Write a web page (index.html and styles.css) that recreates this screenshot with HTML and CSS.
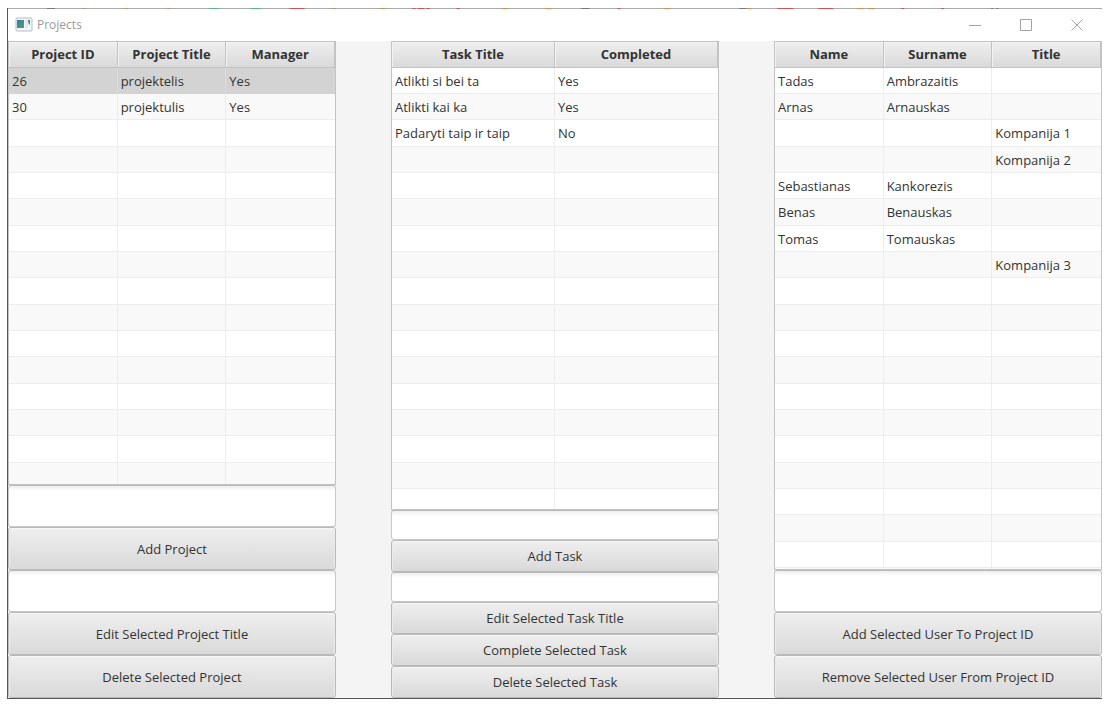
FILE: index.html
```html
<!DOCTYPE html>
<html lang="en">
<head>
<meta charset="utf-8">
<title>Projects</title>
<link rel="stylesheet" href="styles.css">
</head>
<body>
<div class="window">
  <svg class="edge" viewBox="0 0 1095 1" preserveAspectRatio="none" aria-hidden="true">
    <rect width="1095" height="1" fill="#aaa"/>
    <path stroke="#777" d="M39 .5h8M574 .5h8M732 .5h7M984 .5h2M989 .5h2"/>
    <path stroke="#d98a4a" d="M75 .5h3M117 .5h3M159 .5h3M325 .5h3M373 .5h5M495 .5h5M538 .5h6M657 .5h5M740 .5h4M850 .5h6M861 .5h6"/>
    <path stroke="#5cb784" d="M201 .5h10M243 .5h10"/>
    <path stroke="#d0504c" d="M282 .5h15M405 .5h3M410 .5h7M419 .5h3M449 .5h3M610 .5h3M770 .5h16M811 .5h15M894 .5h3M934 .5h3"/>
  </svg>
  <header class="titlebar">
    <svg class="app-icon" width="18" height="16" viewBox="0 0 18 16" aria-hidden="true">
      <defs><linearGradient id="pic" x1="0" y1="0" x2="1" y2="1"><stop offset="0" stop-color="#3a78a8"/><stop offset="1" stop-color="#4ba66c"/></linearGradient></defs>
      <rect x="1" y="1" width="16" height="13" rx="1" fill="#f3f5f6" stroke="#b3bdc4"/>
      <rect x="2" y="3" width="7" height="8" fill="url(#pic)"/>
      <rect x="10" y="3" width="3" height="8" fill="#e4e8ec"/>
      <path d="M13 3h2v5q-2-1-2-5z" fill="#3f8f8c"/>
    </svg>
    <h1 class="title">Projects</h1>
    <div class="window-buttons">
      <button class="window-button" type="button" aria-label="Minimize"><svg width="12" height="12"><path d="M0 6.500h12"/></svg></button>
      <button class="window-button" type="button" aria-label="Maximize"><svg width="12" height="12"><path d="M.5 .5h11v11h-11z"/></svg></button>
      <button class="window-button" type="button" aria-label="Close"><svg width="12" height="12"><path d="M.5 .5l11 11M11.500 .5l-11 11"/></svg></button>
    </div>
  </header>
  <main class="columns">
    <section class="column">
      <div class="table-view">
        <table class="grid" data-rows="16">
          <thead><tr><th>Project ID</th><th>Project Title</th><th>Manager</th></tr></thead>
          <tbody>
            <tr class="selected"><td>26</td><td>projektelis</td><td>Yes</td></tr>
            <tr><td>30</td><td>projektulis</td><td>Yes</td></tr>
          </tbody>
        </table>
      </div>
      <input class="field" type="text" aria-label="New project title">
      <button class="action" type="button">Add Project</button>
      <input class="field" type="text" aria-label="Edited project title">
      <button class="action" type="button">Edit Selected Project Title</button>
      <button class="action" type="button">Delete Selected Project</button>
    </section>
    <section class="column compact">
      <div class="table-view">
        <table class="grid" data-rows="17">
          <thead><tr><th>Task Title</th><th>Completed</th></tr></thead>
          <tbody>
            <tr><td>Atlikti si bei ta</td><td>Yes</td></tr>
            <tr><td>Atlikti kai ka</td><td>Yes</td></tr>
            <tr><td>Padaryti taip ir taip</td><td>No</td></tr>
          </tbody>
        </table>
      </div>
      <input class="field" type="text" aria-label="New task title">
      <button class="action" type="button">Add Task</button>
      <input class="field" type="text" aria-label="Edited task title">
      <button class="action" type="button">Edit Selected Task Title</button>
      <button class="action" type="button">Complete Selected Task</button>
      <button class="action" type="button">Delete Selected Task</button>
    </section>
    <section class="column">
      <div class="table-view">
        <table class="grid" data-rows="20">
          <thead><tr><th>Name</th><th>Surname</th><th>Title</th></tr></thead>
          <tbody>
            <tr><td>Tadas</td><td>Ambrazaitis</td><td></td></tr>
            <tr><td>Arnas</td><td>Arnauskas</td><td></td></tr>
            <tr><td></td><td></td><td>Kompanija 1</td></tr>
            <tr><td></td><td></td><td>Kompanija 2</td></tr>
            <tr><td>Sebastianas</td><td>Kankorezis</td><td></td></tr>
            <tr><td>Benas</td><td>Benauskas</td><td></td></tr>
            <tr><td>Tomas</td><td>Tomauskas</td><td></td></tr>
            <tr><td></td><td></td><td>Kompanija 3</td></tr>
          </tbody>
        </table>
      </div>
      <input class="field" type="text" aria-label="Project ID">
      <button class="action" type="button">Add Selected User To Project ID</button>
      <button class="action" type="button">Remove Selected User From Project ID</button>
    </section>
  </main>
</div>
<script src="script.js"></script>
</body>
</html>
```
FILE: styles.css
```css
* { box-sizing: border-box; }

body {
  margin: 0;
  background: #fff;
  color: #333;
  font-family: "Open Sans", "Noto Sans", sans-serif;
  font-size: 13px;
}

.window {
  position: relative;
  display: flex;
  flex-direction: column;
  height: calc(100vh - 17px);
  min-height: 420px;
  margin: 8px 10px 9px 7px;
  border-left: 1px solid #555;
  border-bottom: 1px solid #555;
  background: #f4f4f4;
}

.edge {
  position: absolute;
  top: 0;
  left: 0;
  width: 100%;
  height: 1px;
}

.titlebar {
  display: flex;
  flex: none;
  align-items: center;
  height: 33px;
  padding-left: 7px;
  background: #fff;
}

.title {
  flex: 1;
  margin: 0 0 0 4px;
  color: #999;
  font-size: 12px;
  font-weight: 400;
}

.window-buttons { display: flex; }

.window-button {
  display: grid;
  place-items: center;
  width: 51px;
  height: 33px;
  padding: 0;
  border: 0;
  background: none;
}

.window-button path {
  fill: none;
  stroke: #a3a3a3;
}

.columns {
  display: grid;
  flex: 1;
  grid-template-columns: repeat(3, minmax(0, 1fr));
  gap: 55px;
  min-height: 0;
}

.column {
  display: flex;
  flex-direction: column;
  min-height: 0;
}

.table-view {
  flex: 1 1 0;
  min-height: 0;
  overflow: hidden;
  border: 1px solid #c3c3c3;
  background: #fff;
}

.grid {
  width: 100%;
  table-layout: fixed;
  border-collapse: separate;
  border-spacing: 0;
}

.grid th {
  height: 26px;
  padding: 0;
  border-right: 1px solid #c3c3c3;
  border-bottom: 1px solid #c3c3c3;
  background: linear-gradient(#efefef, #d9d9d9);
  box-shadow: inset 1px 1px #f3f3f3;
  line-height: 25px;
}

.grid td {
  height: 26px;
  padding: 0 3px;
  overflow: hidden;
  border-right: 1px solid #ededed;
  border-bottom: 1px solid #ededed;
  line-height: 24px;
  white-space: nowrap;
}

.grid td:last-child { border-right: 0; }
.grid tr:nth-child(3n) td { height: 27px; }
.grid tr:nth-child(even) td { background: #f9f9f9; }
.grid .selected td { background: #d3d3d3; border-bottom-color: #d3d3d3; border-right-color: #dcdcdc; }

.field,
.action {
  flex: none;
  width: 100%;
  margin: 0;
  border: 1px solid #b9b9b9;
  border-radius: 3px;
  color: #333;
  font: inherit;
}

.field {
  height: 42px;
  padding: 0 8px;
  border-color: #b9b9b9 #c8c8c8 #c8c8c8;
  background: linear-gradient(#eee, #fff 5px);
}

.action {
  height: 43px;
  padding: 0 8px;
  background: linear-gradient(#efefef, #d9d9d9);
  box-shadow: inset 0 1px #f8f8f8, inset 1px 0 #ebebeb, inset -1px 0 #ebebeb;
}

.compact .field { height: 30px; }
.compact .action { height: 32px; }
```
FILE: script.js
```js
// Pad each table with empty rows so the striping fills its view.
document.querySelectorAll('.grid').forEach(function (table) {
  var body = table.tBodies[0];
  var columns = table.tHead.rows[0].cells.length;
  while (body.rows.length < Number(table.dataset.rows)) {
    var row = body.insertRow();
    for (var i = 0; i < columns; i++) row.insertCell();
  }
});
```
